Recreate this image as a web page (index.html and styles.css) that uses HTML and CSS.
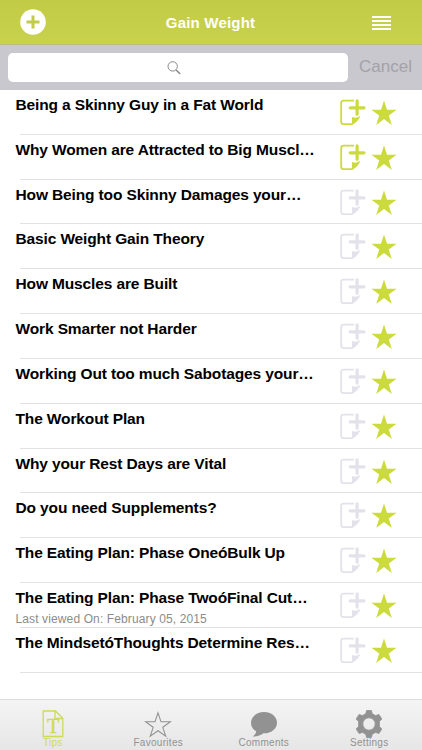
FILE: index.html
```html
<!DOCTYPE html>
<html lang="en">
  <head>
    <meta charset="UTF-8" />
    <title>Gain Weight</title>
    <link rel="stylesheet" href="styles.css">
  </head>

  <body>
    <!-- shared icons -->
    <svg class="sprite">
      <symbol id="note" viewBox="0 0 26 27">
        <path d="M14 1.7H3.5Q1.2 1.7 1.2 4V22.8Q1.2 25.1 3.5 25.1H12.5" fill="none" stroke="currentColor" stroke-width="1.8" />
        <path d="M17.1 1.8V15.2M10.2 8.8H24" fill="none" stroke="currentColor" stroke-width="3.2" stroke-linecap="round" />
        <path d="M12 26V19Q12 17.5 13.3 18.3Q16 19.5 20.5 16.8Q18.5 22.5 12 26Z" fill="currentColor" />
      </symbol>
      <symbol id="star" viewBox="0 0 26 26">
        <path d="M13 .5L16 9.7H25.6L17.8 15.4L20.8 25L13 19.1L5.2 25L8.2 15.4L.4 9.7H10Z" fill="currentColor" />
      </symbol>
    </svg>

    <header class="navbar">
      <svg class="add" viewBox="0 0 26 26">
        <circle cx="13" cy="13" r="12.8" fill="#fff" />
        <path d="M13 6.5V19.5M6.5 13H19.5" stroke="#c3cc48" stroke-width="3" />
      </svg>
      <h1>Gain Weight</h1>
      <svg class="menu" viewBox="0 0 19 14">
        <path d="M0 1H19M0 5H19M0 9H19M0 13H19" stroke="#fff" stroke-width="1.8" />
      </svg>
    </header>

    <div class="search">
      <div class="field">
        <svg class="glass" viewBox="0 0 14 14">
          <circle cx="5.7" cy="5.4" r="4.7" />
          <path d="M9.1 9L13.2 13" stroke-width="1.6" />
        </svg>
      </div>
      <span class="cancel">Cancel</span>
    </div>

    <ul class="tips">
      <li><div class="text"><h2>Being a Skinny Guy in a Fat World</h2></div><svg class="note on"><use href="#note" /></svg><svg class="star"><use href="#star" /></svg></li>
      <li><div class="text"><h2>Why Women are Attracted to Big Muscl…</h2></div><svg class="note on"><use href="#note" /></svg><svg class="star"><use href="#star" /></svg></li>
      <li><div class="text"><h2>How Being too Skinny Damages your…</h2></div><svg class="note"><use href="#note" /></svg><svg class="star"><use href="#star" /></svg></li>
      <li><div class="text"><h2>Basic Weight Gain Theory</h2></div><svg class="note"><use href="#note" /></svg><svg class="star"><use href="#star" /></svg></li>
      <li><div class="text"><h2>How Muscles are Built</h2></div><svg class="note"><use href="#note" /></svg><svg class="star"><use href="#star" /></svg></li>
      <li><div class="text"><h2>Work Smarter not Harder</h2></div><svg class="note"><use href="#note" /></svg><svg class="star"><use href="#star" /></svg></li>
      <li><div class="text"><h2>Working Out too much Sabotages your…</h2></div><svg class="note"><use href="#note" /></svg><svg class="star"><use href="#star" /></svg></li>
      <li><div class="text"><h2>The Workout Plan</h2></div><svg class="note"><use href="#note" /></svg><svg class="star"><use href="#star" /></svg></li>
      <li><div class="text"><h2>Why your Rest Days are Vital</h2></div><svg class="note"><use href="#note" /></svg><svg class="star"><use href="#star" /></svg></li>
      <li><div class="text"><h2>Do you need Supplements?</h2></div><svg class="note"><use href="#note" /></svg><svg class="star"><use href="#star" /></svg></li>
      <li><div class="text"><h2>The Eating Plan: Phase OneóBulk Up</h2></div><svg class="note"><use href="#note" /></svg><svg class="star"><use href="#star" /></svg></li>
      <li><div class="text"><h2>The Eating Plan: Phase TwoóFinal Cut…</h2><p>Last viewed On: February 05, 2015</p></div><svg class="note"><use href="#note" /></svg><svg class="star"><use href="#star" /></svg></li>
      <li><div class="text"><h2>The MindsetóThoughts Determine Res…</h2></div><svg class="note"><use href="#note" /></svg><svg class="star"><use href="#star" /></svg></li>
    </ul>

    <nav class="tabbar">
      <div class="tab active">
        <svg viewBox="0 0 28 28">
          <path d="M4.2 1H16.5L23.8 8.3V26.5H4.2ZM16 1V8.5H23.8" fill="none" stroke="currentColor" stroke-width="1.3" />
          <text x="14" y="23" text-anchor="middle">T</text>
        </svg>
        <span>Tips</span>
      </div>
      <div class="tab">
        <svg viewBox="0 0 28 28">
          <path d="M14 2.8L17 11.8H26.4L18.8 17.3L21.7 26.2L14 20.7L6.3 26.2L9.2 17.3L1.6 11.8H11Z" fill="none" stroke="currentColor" stroke-width="1.1" />
        </svg>
        <span>Favourites</span>
      </div>
      <div class="tab">
        <svg viewBox="0 0 28 28">
          <path d="M14 2C21.3 2 27 6.6 27 12.7C27 19 21 23.5 13.5 23.3C11 25.5 6.5 26.8 2.8 26.5C4.8 25 6 23.2 6.2 21.3C3 19.5 1 16.5 1 12.7C1 6.6 6.7 2 14 2Z" fill="currentColor" />
        </svg>
        <span>Comments</span>
      </div>
      <div class="tab">
        <svg viewBox="0 0 28 28">
          <path fill-rule="evenodd" stroke="currentColor" stroke-width=".8" stroke-linejoin="round" d="M11.6 .5H16.4L17.3 3.8L20.5 5.6L24 4.5L26.8 9L24.4 11.6V16.4L26.8 19L24 23.5L20.5 22.4L17.3 24.2L16.4 27.5H11.6L10.7 24.2L7.5 22.4L4 23.5L1.2 19L3.6 16.4V11.6L1.2 9L4 4.5L7.5 5.6L10.7 3.8ZM14 7.8A6.2 6.2 0 1 0 14 20.2A6.2 6.2 0 1 0 14 7.8Z" fill="currentColor" />
        </svg>
        <span>Settings</span>
      </div>
    </nav>
  </body>
</html>
```

FILE: styles.css
```css
* {
  box-sizing: border-box;
}

body {
  margin: 0;
  height: 750px;
  display: flex;
  flex-direction: column;
  background-color: #fff;
  color: #000;
  font-family: "Liberation Sans", Arial, sans-serif;
  overflow: hidden;
}

h1, h2, p, ul {
  margin: 0;
  padding: 0;
}

.sprite {
  display: none;
}

.navbar {
  height: 45px;
  flex: none;
  display: flex;
  align-items: center;
  justify-content: space-between;
  padding: 0 31px 0 20px;
  background: linear-gradient(#c2cb46, #c9d24d);
  border-bottom: 1px solid #b9bc82;
}

.navbar h1 {
  color: #fff;
  font-size: 15px;
  line-height: 18px;
  letter-spacing: 0.2px;
  padding: 2px 0 0 3px;
}

.add {
  width: 26px;
  height: 26px;
}

.menu {
  width: 19px;
  height: 14px;
  margin-top: 1px;
}

.search {
  height: 45px;
  flex: none;
  display: flex;
  align-items: center;
  padding: 0 9px 0 8px;
  background-color: #c9c8ce;
}

.field {
  width: 340px;
  height: 29px;
  display: flex;
  align-items: center;
  justify-content: center;
  background-color: #fff;
  border-radius: 5px;
}

.glass {
  width: 14px;
  height: 14px;
  margin-right: 8px;
  fill: none;
  stroke: #8a8a8a;
}

.cancel {
  margin-left: 11px;
  padding-bottom: 2px;
  color: #a3a2a8;
  font-size: 17px;
  line-height: 20px;
}

.tips {
  flex: 1;
  list-style: none;
}

.tips li {
  height: 44.83px;
  display: flex;
  padding: 0 25px 0 15.5px;
  background: linear-gradient(#e2e2e4, #e2e2e4) 20px 100% / 100% 1px no-repeat;
}

.text {
  width: 324px;
  padding-top: 6px;
  white-space: nowrap;
}

.text h2 {
  font-size: 15.5px;
  line-height: 18px;
  letter-spacing: -0.13px;
}

.text p {
  color: #8c8c8c;
  font-size: 12px;
  line-height: 14px;
  letter-spacing: 0.12px;
  margin-top: 5px;
}

.note {
  width: 26px;
  height: 27px;
  margin-top: 9px;
  color: #e3e2ea;
}

.note.on {
  color: #cbdb3e;
}

.star {
  width: 26px;
  height: 26px;
  margin: 10px 0 0 5.5px;
  color: #cbdb3e;
}

.tabbar {
  height: 51px;
  flex: none;
  display: flex;
  background: linear-gradient(#f4f4f4, #e6e6e6);
  border-top: 1px solid #dcdcdc;
}

.tab {
  flex: 1;
  display: flex;
  flex-direction: column;
  align-items: center;
  padding-top: 10px;
  color: #929292;
}

.tab.active {
  color: #cddb56;
}

.tab svg {
  width: 28px;
  height: 28px;
}

.tab text {
  font-family: "Liberation Serif", serif;
  font-size: 20px;
  fill: currentColor;
  stroke: currentColor;
  stroke-width: 0.4px;
}

.tab span {
  font-size: 10px;
  line-height: 11px;
  letter-spacing: 0.3px;
  margin-top: -1px;
}
```
